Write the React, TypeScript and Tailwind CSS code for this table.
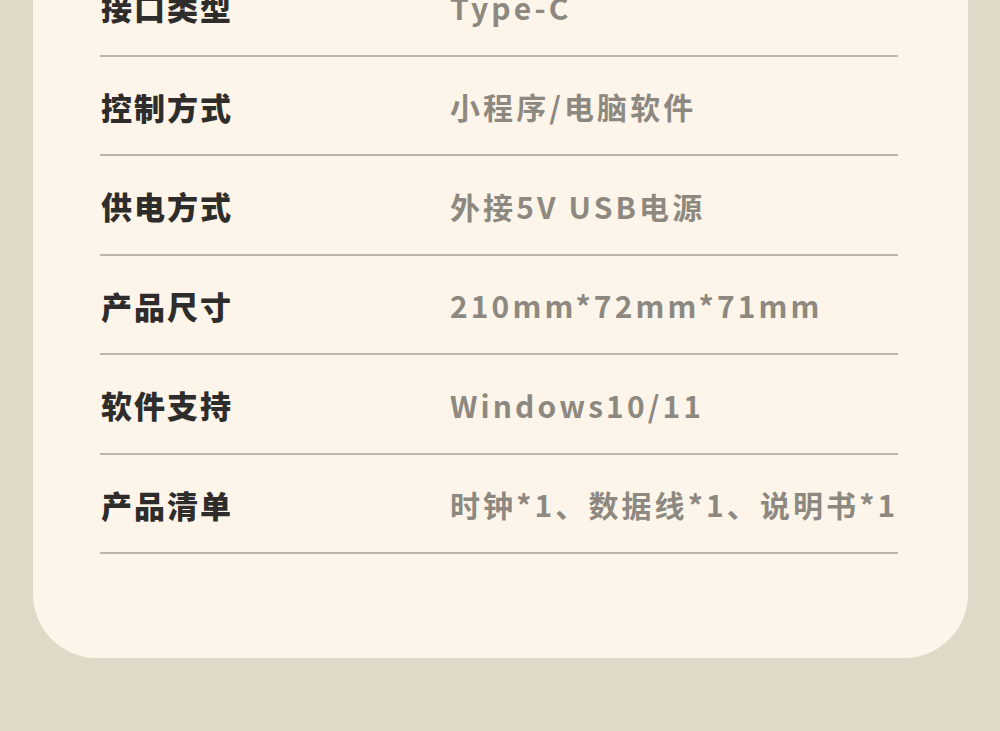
import React from "react";

const rows: [string, string][] = [
  ["接口类型", "Type-C"],
  ["控制方式", "小程序/电脑软件"],
  ["供电方式", "外接5V USB电源"],
  ["产品尺寸", "210mm*72mm*71mm"],
  ["软件支持", "Windows10/11"],
  ["产品清单", "时钟*1、数据线*1、说明书*1"],
];

export default function App() {
  return (
    <div className="w-[1000px] h-[731px] overflow-hidden bg-[#e0d9c8]">
      <div
        className="ml-[33px] w-[935px] -mt-[43px] bg-[#fdf5ea] rounded-b-[64px] pb-[104px] pl-[67px] pr-[70px]"
        style={{ fontFamily: '"Noto Sans CJK SC", "Noto Sans", sans-serif' }}
      >
        {rows.map(([k, v]) => (
          <div
            key={k}
            className="h-[99.5px] flex items-center border-b-2 border-[#bcb6aa] pt-[3px]"
          >
            <div className="w-[350px] shrink-0 pl-[1px] text-[31px] font-black text-[#2f2d2b] tracking-[2px]">
              {k}
            </div>
            <div className="text-[30px] font-bold text-[#8d8981] tracking-[3.1px] whitespace-nowrap">
              {v}
            </div>
          </div>
        ))}
      </div>
    </div>
  );
}
